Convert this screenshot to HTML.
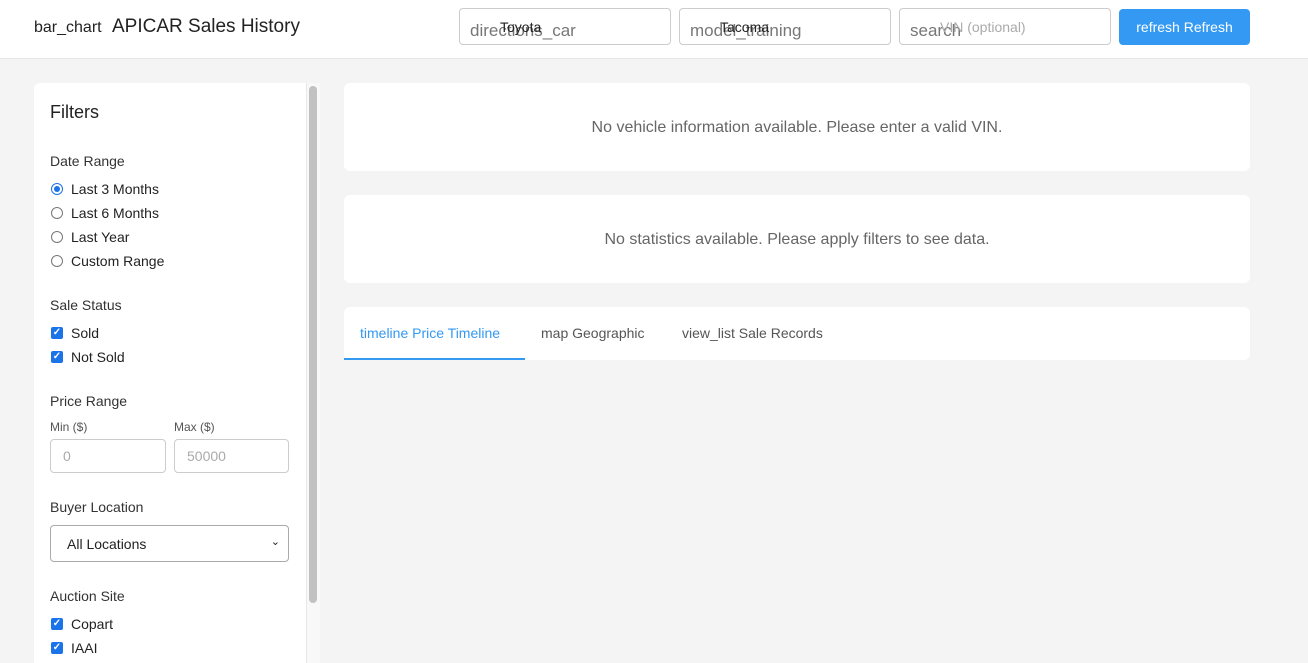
<!DOCTYPE html>
<html><head><style>
*{box-sizing:border-box;margin:0;padding:0}
body{width:1308px;height:652px;overflow:hidden;background:#f4f4f4;font-family:"Liberation Sans",sans-serif;color:#333;position:relative}
.a{position:absolute}
.hdr{left:0;top:0;width:1308px;height:59px;background:#fff;border-bottom:1px solid #e6e6e6}
.inp{background:#fff;border:1px solid #ccc;border-radius:4px;height:37px;top:8px}
.big{position:absolute;left:10px;top:12px;font-size:17px;color:#777}
.sm{position:absolute;font-size:14px;top:10px}
.card{background:#fff;border-radius:6px;left:344px;width:906px}
.msg{width:100%;text-align:center;font-size:16px;color:#666}
.lbl{font-size:14px;color:#333;left:50px}
.opt{font-size:14px;left:71px;color:#222}
.rad{left:51px;width:12px;height:12px;border:1px solid #777;border-radius:50%;background:#fff}
.chk{left:51px;width:12px;height:12px;border-radius:2px;background:#1a73e8;color:#fff;font-size:10px;line-height:12px;text-align:center;font-weight:bold}
.box{border:1px solid #ccc;border-radius:4px;background:#fff;height:34px}
</style></head><body>
<div class="a hdr"></div>
<div class="a" style="left:34px;top:19px;font-size:16px;color:#222">bar_chart</div>
<div class="a" style="left:112px;top:16px;font-size:19px;color:#222">APICAR Sales History</div>
<div class="a inp" style="left:459px;width:212px"><span class="big">directions_car</span><span class="sm" style="left:40px;color:#222">Toyota</span></div>
<div class="a inp" style="left:679px;width:212px"><span class="big">model_training</span><span class="sm" style="left:40px;color:#222">Tacoma</span></div>
<div class="a inp" style="left:899px;width:212px"><span class="big">search</span><span class="sm" style="left:40px;color:#aaa">VIN (optional)</span></div>
<div class="a" style="left:1119px;top:9px;width:131px;height:36px;background:#3399f3;border-radius:4px;color:#fff;font-size:14px;text-align:center;line-height:36px">refresh Refresh</div>

<div class="a" style="left:34px;top:83px;width:272px;height:580px;background:#fff;border-radius:6px 0 0 0"></div>
<div class="a" style="left:306px;top:83px;width:14px;height:580px;background:#f8f8f8;border-left:1px solid #e8e8e8"></div>
<div class="a" style="left:309px;top:86px;width:8px;height:517px;background:#c1c1c1;border-radius:4px"></div>
<div class="a" style="left:50px;top:102px;font-size:18px;color:#222">Filters</div>
<div class="a lbl" style="top:153px">Date Range</div>
<div class="a rad" style="top:183px;border:1px solid #1a73e8"><div style="margin:2px;width:6px;height:6px;border-radius:50%;background:#1a73e8"></div></div>
<div class="a opt" style="top:181px">Last 3 Months</div>
<div class="a rad" style="top:207px"></div><div class="a opt" style="top:205px">Last 6 Months</div>
<div class="a rad" style="top:231px"></div><div class="a opt" style="top:229px">Last Year</div>
<div class="a rad" style="top:255px"></div><div class="a opt" style="top:253px">Custom Range</div>
<div class="a lbl" style="top:297px">Sale Status</div>
<div class="a chk" style="top:327px">✓</div><div class="a opt" style="top:325px">Sold</div>
<div class="a chk" style="top:351px">✓</div><div class="a opt" style="top:349px">Not Sold</div>
<div class="a lbl" style="top:393px">Price Range</div>
<div class="a" style="left:50px;top:420px;font-size:12px;color:#555">Min ($)</div>
<div class="a" style="left:174px;top:420px;font-size:12px;color:#555">Max ($)</div>
<div class="a box" style="left:50px;top:439px;width:116px"><span style="position:absolute;left:12px;top:8px;font-size:14px;color:#aaa">0</span></div>
<div class="a box" style="left:174px;top:439px;width:115px"><span style="position:absolute;left:12px;top:8px;font-size:14px;color:#aaa">50000</span></div>
<div class="a lbl" style="top:499px">Buyer Location</div>
<div class="a box" style="left:50px;top:525px;width:239px;height:37px;border-color:#aaa"><span style="position:absolute;left:16px;top:10px;font-size:14px;color:#222">All Locations</span><span style="position:absolute;right:8px;top:9px;font-size:11px;color:#222">⌄</span></div>
<div class="a lbl" style="top:588px">Auction Site</div>
<div class="a chk" style="top:618px">✓</div><div class="a opt" style="top:616px">Copart</div>
<div class="a chk" style="top:642px">✓</div><div class="a opt" style="top:640px">IAAI</div>

<div class="a card" style="top:83px;height:88px"><div class="msg" style="margin-top:36px">No vehicle information available. Please enter a valid VIN.</div></div>
<div class="a card" style="top:195px;height:88px"><div class="msg" style="margin-top:36px">No statistics available. Please apply filters to see data.</div></div>
<div class="a card" style="top:307px;height:53px">
<div class="a" style="left:16px;top:18px;font-size:14px;color:#3399f3">timeline Price Timeline</div>
<div class="a" style="left:0;top:51px;width:181px;height:2px;background:#3399f3"></div>
<div class="a" style="left:197px;top:18px;font-size:14px;color:#555">map Geographic</div>
<div class="a" style="left:338px;top:18px;font-size:14px;color:#555">view_list Sale Records</div>
</div>
</body></html>
